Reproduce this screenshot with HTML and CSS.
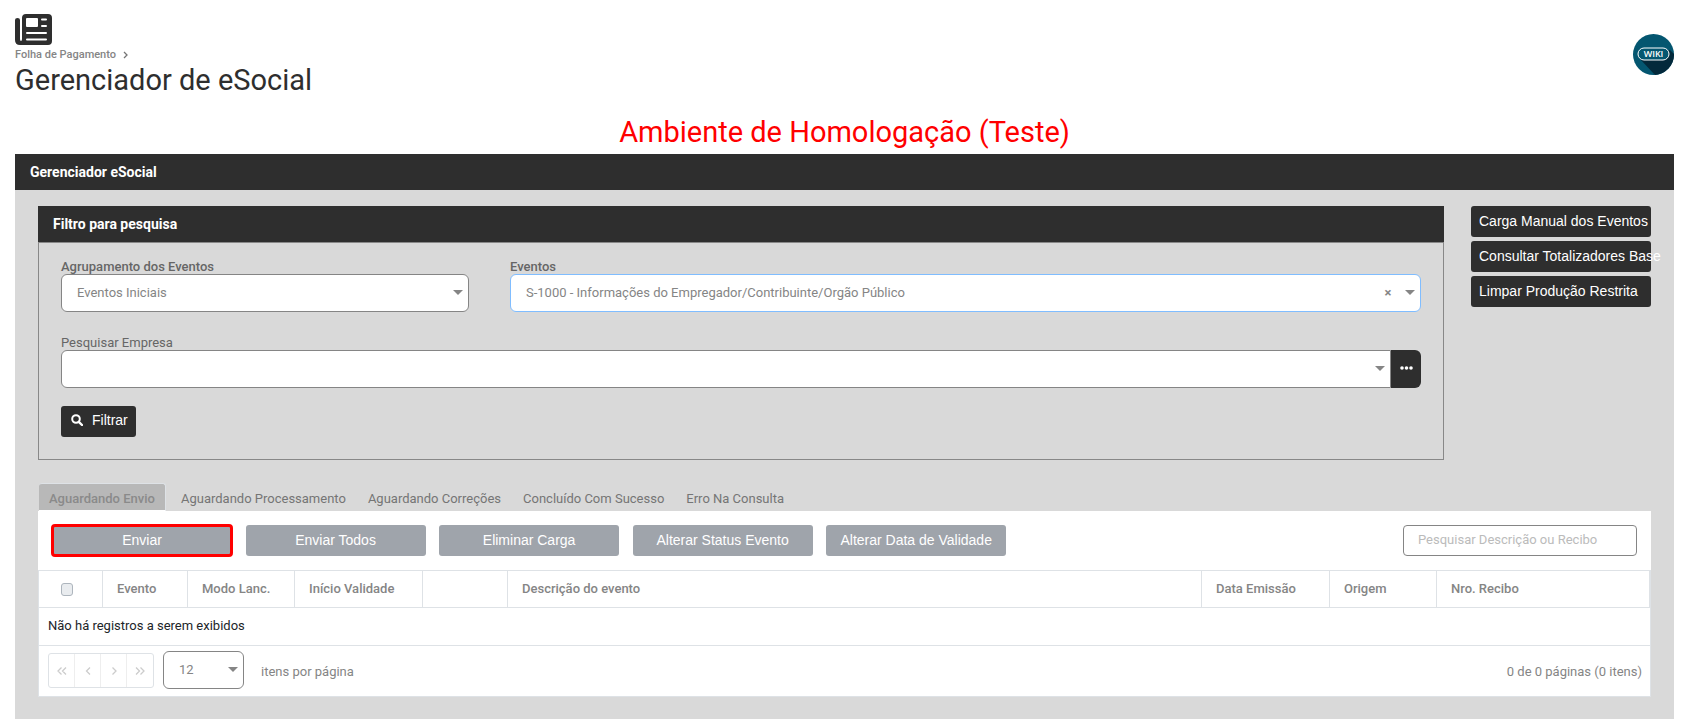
FILE: index.html
```html
<!DOCTYPE html>
<html lang="pt-br">

<head>
	<meta charset="UTF-8">
	<title>Gerenciador de eSocial</title>
	<link rel="stylesheet" href="styles.css">
</head>

<body>
	<header class="topo">
		<div class="topo-titulo">
			<svg class="topo-icone" viewBox="0 0 37 31" aria-hidden="true">
				<path fill="#2e2e2e" fill-rule="evenodd" d="M11 0H33Q37 0 37 4V27Q37 31 33 31H5Q0 31 0 26V6Q0 4 2.500 4Q5 4 5 6V25Q5 27 6 27Q7 27 7 25V4Q7 0 11 0ZM12 4Q11 4 11 5V12Q11 13 12 13H22Q23 13 23 12V5Q23 4 22 4ZM27 4.500H31Q32 4.500 32 5.500Q32 6.500 31 6.500H27Q26 6.500 26 5.500Q26 4.500 27 4.500ZM27 11H31Q32 11 32 12Q32 13 31 13H27Q26 13 26 12Q26 11 27 11ZM12 18H31Q32 18 32 19Q32 20 31 20H12Q11 20 11 19Q11 18 12 18ZM12 24.500H31Q32 24.500 32 25.500Q32 26.500 31 26.500H12Q11 26.500 11 25.500Q11 24.500 12 24.500Z" />
			</svg>
			<nav class="trilha">
				<a href="#">Folha de Pagamento</a>
				<svg width="5" height="8" viewBox="0 0 5 8" aria-hidden="true">
					<path d="M1 1L4 4L1 7" fill="none" stroke="#757575" stroke-width="1.300" />
				</svg>
			</nav>
			<h1>Gerenciador de eSocial</h1>
		</div>
		<a class="wiki" href="#" aria-label="Wiki">
			<svg width="41" height="41" viewBox="0 0 41 41">
				<circle cx="20.500" cy="20.500" r="20.500" fill="#045670" />
				<path d="M7 25L22 41A20.500 20.500 0 0 0 41 20L37 16Z" fill="#03293b" />
				<rect x="5" y="14" width="31" height="12" rx="6" fill="#045670" stroke="#fff" />
				<text class="wiki-texto" x="20.500" y="23" text-anchor="middle">WIKI</text>
			</svg>
		</a>
	</header>

	<h2 class="ambiente">Ambiente de Homologação (Teste)</h2>

	<main class="painel">
		<div class="barra">Gerenciador eSocial</div>
		<div class="painel-corpo">

			<div class="linha-filtro">
				<form class="filtro">
					<div class="barra">Filtro para pesquisa</div>
					<div class="filtro-corpo">
						<div class="campos">
							<div class="campo campo-grupo">
								<label for="agrupamento">Agrupamento dos Eventos</label>
								<div class="caixa">
									<select id="agrupamento">
										<option>Eventos Iniciais</option>
									</select>
								</div>
							</div>
							<div class="campo campo-evento">
								<label for="eventos">Eventos</label>
								<div class="caixa">
									<select id="eventos" class="foco">
										<option>S-1000 - Informações do Empregador/Contribuinte/Orgão Público</option>
									</select>
									<button type="button" class="limpar" aria-label="Limpar">×</button>
								</div>
							</div>
						</div>
						<div class="campo">
							<label class="fino" for="empresa">Pesquisar Empresa</label>
							<div class="grupo-empresa">
								<div class="caixa">
									<select id="empresa">
										<option></option>
									</select>
								</div>
								<button type="button" class="mais" aria-label="Mais opções">
									<svg width="13" height="4" viewBox="0 0 13 4">
										<circle cx="2" cy="2" r="1.800" fill="#fff" />
										<circle cx="6.500" cy="2" r="1.800" fill="#fff" />
										<circle cx="11" cy="2" r="1.800" fill="#fff" />
									</svg>
								</button>
							</div>
						</div>
						<button type="button" class="botao filtrar">
							<svg width="12" height="12" viewBox="0 0 12 12" aria-hidden="true">
								<circle cx="5" cy="5" r="3.800" fill="none" stroke="#fff" stroke-width="2" />
								<path d="M7.800 7.800L11 11" stroke="#fff" stroke-width="2.400" stroke-linecap="round" />
							</svg>
							Filtrar
						</button>
					</div>
				</form>

				<div class="lateral">
					<button type="button" class="botao">Carga Manual dos Eventos</button>
					<button type="button" class="botao">Consultar Totalizadores Base</button>
					<button type="button" class="botao">Limpar Produção Restrita</button>
				</div>
			</div>

			<nav class="abas">
				<a class="ativa" href="#">Aguardando Envio</a>
				<a href="#">Aguardando Processamento</a>
				<a href="#">Aguardando Correções</a>
				<a href="#">Concluído Com Sucesso</a>
				<a href="#">Erro Na Consulta</a>
			</nav>

			<section class="conteudo">
				<div class="acoes">
					<div class="acao"><button type="button" class="botao destaque">Enviar</button></div>
					<div class="acao"><button type="button" class="botao">Enviar Todos</button></div>
					<div class="acao"><button type="button" class="botao">Eliminar Carga</button></div>
					<div class="acao"><button type="button" class="botao">Alterar Status Evento</button></div>
					<div class="acao"><button type="button" class="botao">Alterar Data de Validade</button></div>
					<input class="busca" type="text" placeholder="Pesquisar Descrição ou Recibo" aria-label="Pesquisar Descrição ou Recibo">
				</div>

				<div class="grade">
					<table>
						<colgroup>
							<col class="c-check">
							<col class="c-curta">
							<col class="c-media">
							<col class="c-data">
							<col class="c-curta">
							<col>
							<col class="c-data">
							<col class="c-media">
							<col class="c-recibo">
						</colgroup>
						<thead>
							<tr>
								<th class="marcar"><input type="checkbox" aria-label="Selecionar todos"></th>
								<th>Evento</th>
								<th>Modo Lanc.</th>
								<th>Início Validade</th>
								<th></th>
								<th>Descrição do evento</th>
								<th>Data Emissão</th>
								<th>Origem</th>
								<th>Nro. Recibo</th>
							</tr>
						</thead>
						<tbody>
							<tr>
								<td colspan="9">Não há registros a serem exibidos</td>
							</tr>
						</tbody>
					</table>

					<div class="rodape">
						<div class="paginas">
							<button type="button" aria-label="Primeira página">
								<svg width="10" height="8" viewBox="0 0 10 8"><path d="M4.500 0.500L1 4L4.500 7.500M9 0.500L5.500 4L9 7.500" /></svg>
							</button>
							<button type="button" aria-label="Página anterior">
								<svg width="10" height="8" viewBox="0 0 10 8"><path d="M7 0.500L3.500 4L7 7.500" /></svg>
							</button>
							<button type="button" aria-label="Próxima página">
								<svg width="10" height="8" viewBox="0 0 10 8"><path d="M3.500 0.500L7 4L3.500 7.500" /></svg>
							</button>
							<button type="button" aria-label="Última página">
								<svg width="10" height="8" viewBox="0 0 10 8"><path d="M1 0.500L4.500 4L1 7.500M5.500 0.500L9 4L5.500 7.500" /></svg>
							</button>
						</div>
						<div class="caixa caixa-itens">
							<select id="itens">
								<option>12</option>
							</select>
						</div>
						<label class="itens" for="itens">itens por página</label>
						<span class="total">0 de 0 páginas (0 itens)</span>
					</div>
				</div>
			</section>
		</div>
	</main>
</body>

</html>
```
FILE: styles.css
```css
* {
	box-sizing: border-box;
	margin: 0;
	padding: 0;
}

body {
	padding: 13px 11px 9px 15px;
	background: #fff;
	color: #212529;
	font-family: Roboto, sans-serif;
	font-size: 13px;
	line-height: 20px;
}

a {
	color: inherit;
	text-decoration: none;
}

button,
input,
select {
	font-family: inherit;
	font-size: 13px;
}

/* topo */
.topo {
	display: flex;
	justify-content: space-between;
	align-items: center;
	height: 82px;
}

.topo-icone {
	display: block;
	width: 37px;
	height: 31px;
}

.trilha {
	display: flex;
	align-items: center;
	gap: 7px;
	height: 20px;
	color: #858585;
	font-size: 11px;
	font-weight: 500;
}

.topo h1 {
	color: #2e2e2e;
	font-size: 29px;
	font-weight: 400;
	line-height: 30px;
}

.wiki {
	display: block;
	height: 41px;
}

.wiki-texto {
	fill: #fff;
	font-family: "Open Sans", sans-serif;
	font-size: 9px;
	font-weight: 600;
}

.ambiente {
	padding: 17px 0 2px;
	color: #f00;
	font-size: 29px;
	font-weight: 400;
	line-height: 40px;
	text-align: center;
}

/* painel */
.painel {
	background: #d9d9d9;
}

.barra {
	height: 36px;
	padding: 0 15px;
	background: #2e2e2e;
	color: #fff;
	font-size: 14px;
	font-weight: 700;
	line-height: 36px;
}

.painel-corpo {
	padding: 16px 23px 22px;
}

.linha-filtro {
	display: flex;
	gap: 27px;
}

.filtro {
	flex: 1;
}

.filtro-corpo {
	padding: 15px 22px 22px;
	border: 1px solid #888;
}

.campos {
	display: flex;
	gap: 41px;
	margin-bottom: 22px;
}

.campo-grupo {
	flex: 0 0 30%;
}

.campo-evento {
	flex: 1;
}

.campo label {
	display: block;
	height: 16px;
	color: #666;
	font-weight: 500;
	line-height: 18px;
}

.campo .fino {
	font-weight: 400;
}

/* caixas de seleção */
.caixa {
	position: relative;
	flex: 1;
}

.caixa::after {
	content: "";
	position: absolute;
	top: 16px;
	right: 6px;
	border: 5px solid transparent;
	border-top-color: #858585;
	border-bottom: 0;
	pointer-events: none;
}

.caixa select {
	display: block;
	width: 100%;
	height: 38px;
	padding: 0 15px 2px;
	appearance: none;
	background: #fff;
	border: 1px solid #858585;
	border-radius: 6px;
	color: #858585;
}

.caixa .foco {
	border-color: #80bdff;
}

.limpar {
	position: absolute;
	top: 9px;
	right: 28px;
	width: 10px;
	background: none;
	border: 0;
	color: #858585;
	font-weight: 700;
	line-height: 20px;
}

.grupo-empresa {
	display: flex;
}

.grupo-empresa select {
	border-radius: 6px 0 0 6px;
}

.mais {
	display: flex;
	align-items: center;
	justify-content: center;
	width: 30px;
	padding-bottom: 2px;
	background: #2e2e2e;
	border: 0;
	border-radius: 0 6px 6px 0;
}

/* botões */
.botao {
	height: 31px;
	padding: 0 8px 1px;
	background: #2e2e2e;
	border: 0;
	border-radius: 3px;
	color: #fff;
	font-family: "Liberation Sans", Arial, sans-serif;
	font-size: 14px;
	white-space: nowrap;
}

.filtrar {
	display: flex;
	align-items: center;
	gap: 9px;
	margin-top: 18px;
	padding: 0 8px 3px 10px;
}

.lateral {
	display: flex;
	flex-direction: column;
	gap: 4px;
	width: 180px;
}

.lateral .botao {
	text-align: left;
}

/* abas */
.abas {
	display: flex;
	margin-top: 23px;
	padding-left: 1px;
	color: #757575;
}

.abas a {
	height: 28px;
	padding: 6px 11px 0;
}

.abas .ativa {
	margin-right: 4px;
	padding: 5px 10px 0;
	background: #b8b8b8;
	border: 1px solid #dee2e6;
	border-left: 0;
	border-bottom-color: #fff;
	border-radius: 3px 3px 0 0;
	color: #8a8a8a;
	font-weight: 500;
}

.conteudo {
	background: #fff;
}

.acoes {
	display: flex;
	padding: 14px 0;
}

.acao {
	flex: 0 0 12%;
	min-width: 0;
	padding-left: 14px;
}

.acao .botao {
	width: 180px;
	background: #9fa4ab;
}

.acao .destaque {
	outline: 3px solid #f00;
	outline-offset: -2px;
}

.busca {
	width: 234px;
	height: 31px;
	margin: 0 14px 0 auto;
	padding: 0 14px 2px;
	border: 1px solid #858585;
	border-radius: 4px;
}

.busca::placeholder {
	color: #bbb;
}

/* grade */
.grade {
	border: 1px solid #dee2e6;
}

.grade table {
	width: 100%;
	table-layout: fixed;
	border-collapse: separate;
	border-spacing: 0;
}

.c-check {
	width: 64px;
}

.c-curta {
	width: 85px;
}

.c-media {
	width: 107px;
}

.c-data {
	width: 128px;
}

.c-recibo {
	width: 213px;
}

.grade th {
	height: 37px;
	padding: 0 14px;
	border-right: 1px solid #dee2e6;
	border-bottom: 1px solid #dee2e6;
	color: #858585;
	font-weight: 500;
	text-align: left;
}

.grade td {
	height: 38px;
	padding: 0 9px 2px;
	border-bottom: 1px solid #dee2e6;
}

.grade .marcar {
	padding: 0 22px;
}

.marcar input {
	display: block;
	width: 12px;
	height: 13px;
	appearance: none;
	background: #e9ecef;
	border: 1px solid #adb5bd;
	border-radius: 3px;
}

.rodape {
	display: flex;
	align-items: center;
	padding: 5px 8px 7px 9px;
	color: #858585;
}

.paginas {
	display: flex;
	border: 1px solid #dee2e6;
	border-radius: 3px;
}

.paginas button {
	width: 26px;
	height: 33px;
	background: none;
	border: 0;
	border-right: 1px solid #eee;
}

.paginas button:last-child {
	border-right: 0;
}

.paginas path {
	fill: none;
	stroke: #ccc;
	stroke-width: 1.3;
}

.caixa-itens {
	flex: 0 0 81px;
	margin: 0 17px 0 9px;
}

.itens,
.total {
	padding-top: 4px;
}

.total {
	margin-left: auto;
}
```
